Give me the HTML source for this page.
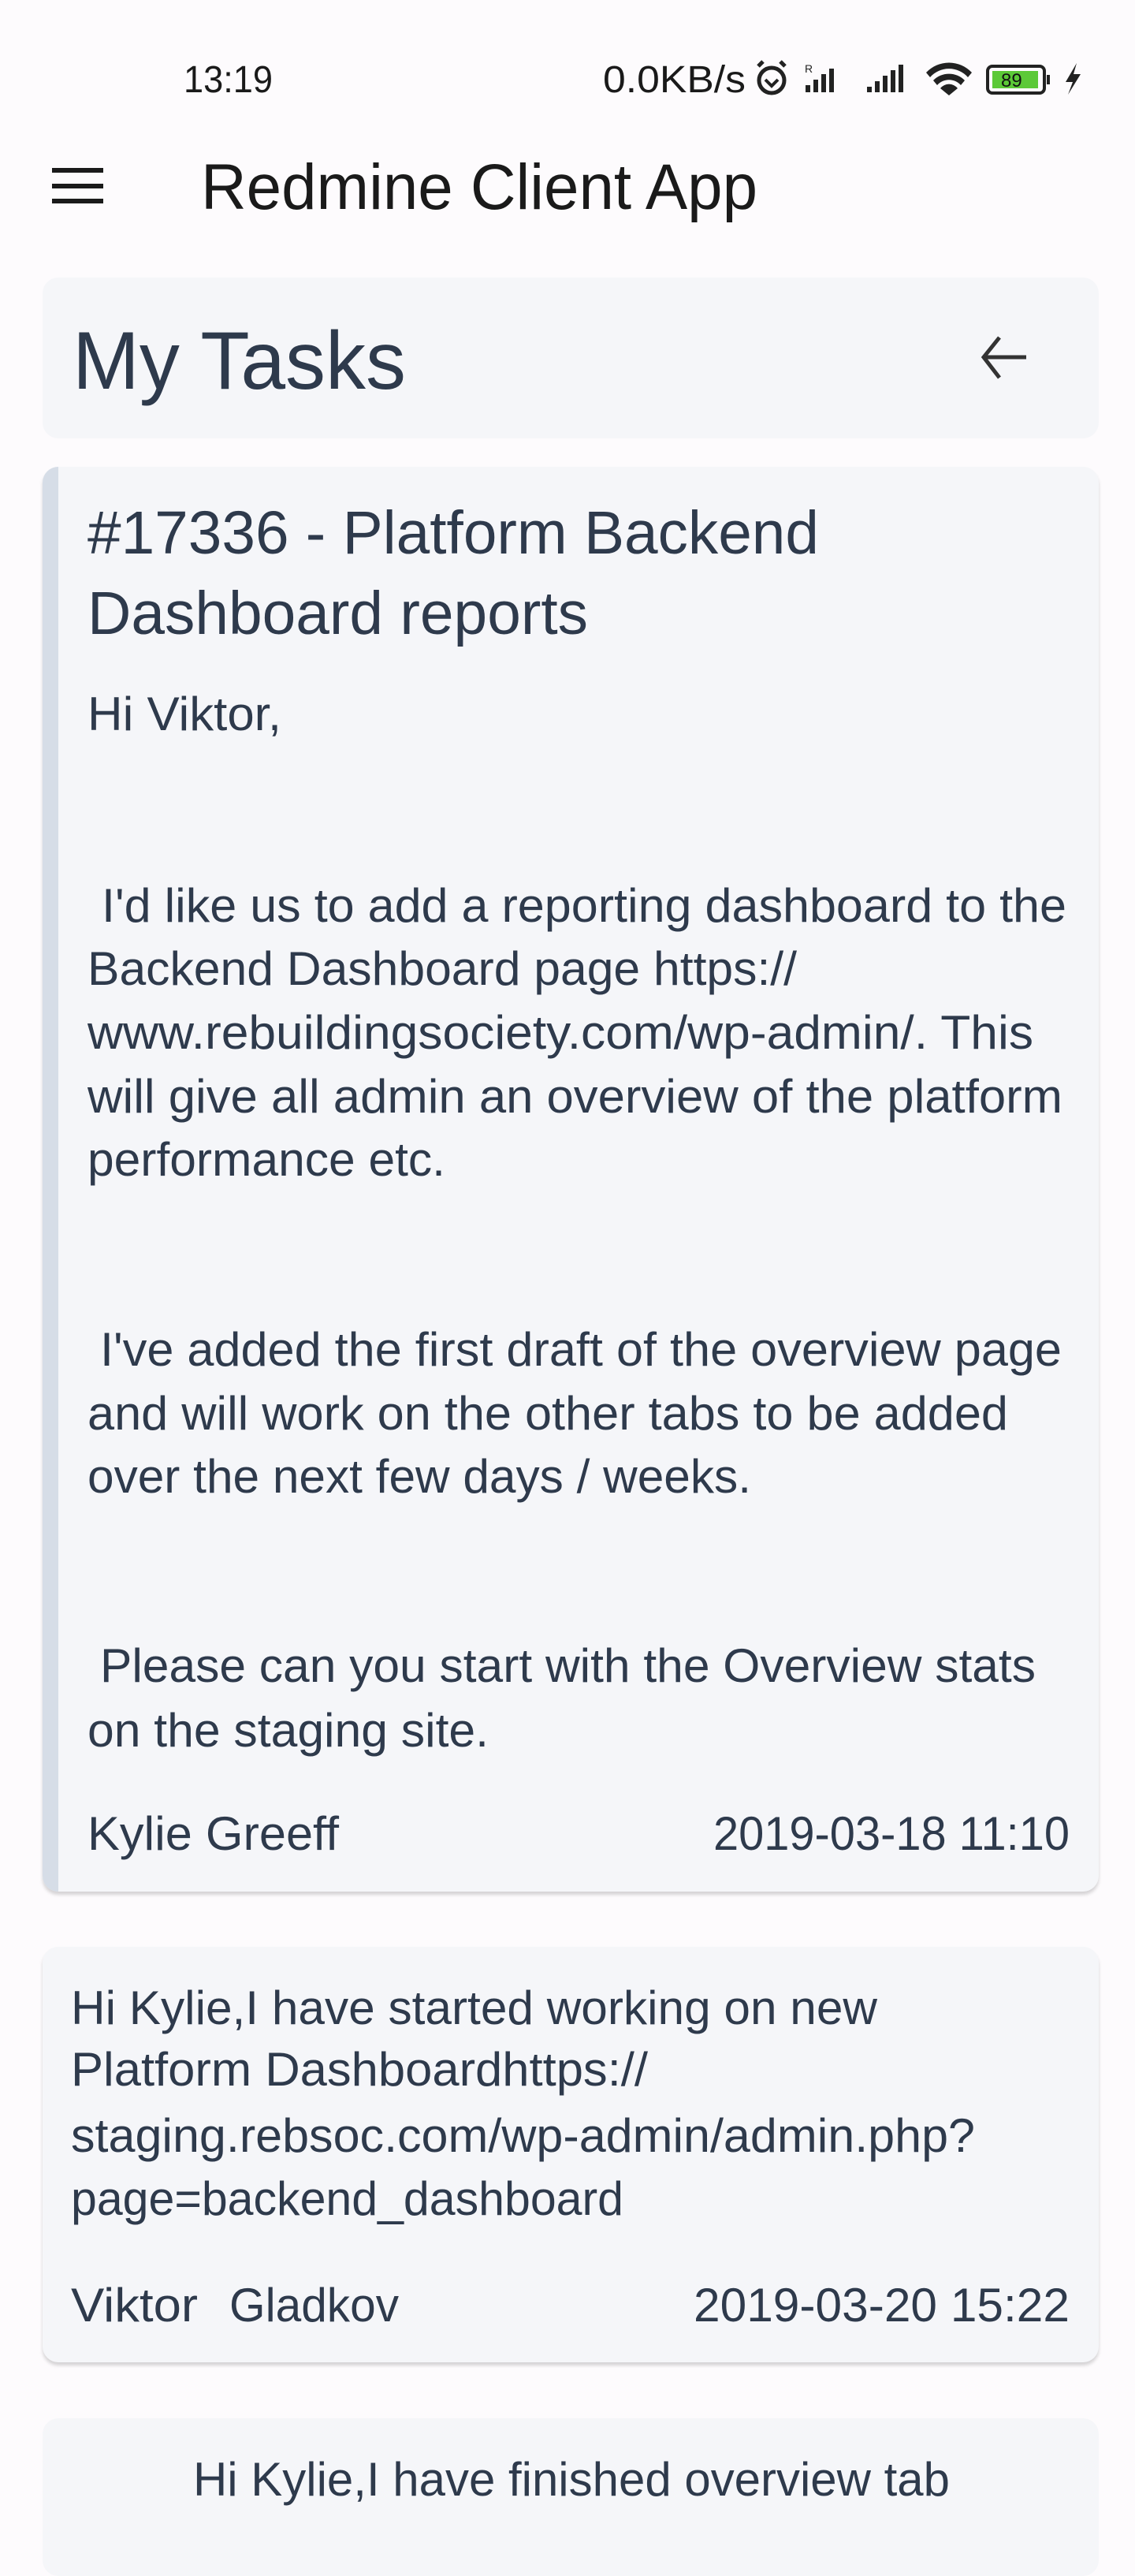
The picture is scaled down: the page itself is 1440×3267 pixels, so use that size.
<!DOCTYPE html>
<html><head><meta charset="utf-8"><style>
body{margin:0;width:1440px;height:3200px;background:#fdfbfd;overflow:hidden;position:relative;font-family:"Liberation Sans",sans-serif}
.card{position:absolute;left:54px;width:1340px;background:#f5f6f9;border-radius:20px}
svg{position:absolute;left:0;top:0}
</style></head><body>
<div class="card" style="top:352px;height:204px"></div>
<div class="card" style="top:592px;height:1807px;box-shadow:0 4px 4px rgba(0,0,0,.16);overflow:hidden"><div style="position:absolute;left:0;top:0;bottom:0;width:20px;background:#d6dde7"></div></div>
<div class="card" style="top:2469px;height:527px;box-shadow:0 4px 4px rgba(0,0,0,.16)"></div>
<div class="card" style="top:3067px;height:200px"></div>
<svg width="1440" height="3200" viewBox="0 0 1440 3200" font-family="Liberation Sans, sans-serif">
<g fill="#1a1a1a" font-size="48">
<text x="233" y="117" textLength="113" lengthAdjust="spacingAndGlyphs">13:19</text>
<text x="765" y="117" textLength="181" lengthAdjust="spacingAndGlyphs">0.0KB/s</text>
</g>
<g fill="none" stroke="#222" stroke-width="5">
<circle cx="979" cy="102" r="16"/><path d="M971 101l8 8 8-8" stroke-width="4"/><path d="M962 84l6-6M996 84l-6-6"/>
</g>
<g fill="#222">
<rect x="1022" y="108" width="6" height="9"/><rect x="1032" y="101" width="6" height="16"/><rect x="1042" y="94" width="6" height="23"/><rect x="1052" y="87" width="6" height="30"/>
<text x="1021" y="92" font-size="14">R</text>
<rect x="1100" y="110" width="6" height="7"/><rect x="1110" y="103" width="6" height="14"/><rect x="1120" y="96" width="6" height="21"/><rect x="1130" y="89" width="6" height="28"/><rect x="1140" y="82" width="6" height="35"/>
<path d="M1175 92a40 40 0 0 1 58 0l-5 6a32 32 0 0 0 -48 0z"/><path d="M1184 102a28 28 0 0 1 40 0l-5 6a20 20 0 0 0 -30 0z"/><path d="M1193 112a14 14 0 0 1 22 0l-11 9z"/>
<rect x="1253" y="84" width="72" height="34" rx="6" fill="none" stroke="#222" stroke-width="4"/>
<rect x="1259" y="90" width="58" height="22" fill="#5cc938"/>
<text x="1270" y="110" font-size="24" fill="#111">89</text>
<rect x="1328" y="95" width="4" height="12"/>
<path d="M1366 80l-14 24h9l-6 16 16-26h-9z"/>
</g>
<g fill="#1a1a1a"><rect x="66" y="213" width="65" height="6"/><rect x="66" y="233" width="65" height="6"/><rect x="66" y="252" width="65" height="6"/></g>
<text x="255" y="265" font-size="82" fill="#1a1a1a" textLength="706" lengthAdjust="spacingAndGlyphs">Redmine Client App</text>
<text x="92" y="493" font-size="104" fill="#2e3a4c" textLength="423" lengthAdjust="spacingAndGlyphs">My Tasks</text>
<path d="M1302 453H1250M1268 428L1248 453 1268 479" fill="none" stroke="#333" stroke-width="5"/>
<g fill="#2e3a4c" font-size="77">
<text x="111" y="702" textLength="928" lengthAdjust="spacingAndGlyphs">#17336 - Platform Backend</text>
<text x="111" y="804" textLength="635" lengthAdjust="spacingAndGlyphs">Dashboard reports</text>
</g>
<g fill="#2e3a4c" font-size="60">
<text x="111" y="926" textLength="246" lengthAdjust="spacingAndGlyphs">Hi Viktor,</text>
<text x="129" y="1169" textLength="1224" lengthAdjust="spacingAndGlyphs">I'd like us to add a reporting dashboard to the</text>
<text x="111" y="1249" textLength="900" lengthAdjust="spacingAndGlyphs">Backend Dashboard page https://</text>
<text x="111" y="1330" textLength="1200" lengthAdjust="spacingAndGlyphs">www.rebuildingsociety.com/wp-admin/. This</text>
<text x="111" y="1411" textLength="1237" lengthAdjust="spacingAndGlyphs">will give all admin an overview of the platform</text>
<text x="111" y="1491" textLength="454" lengthAdjust="spacingAndGlyphs">performance etc.</text>
<text x="127" y="1732" textLength="1220" lengthAdjust="spacingAndGlyphs">I've added the first draft of the overview page</text>
<text x="111" y="1813" textLength="1168" lengthAdjust="spacingAndGlyphs">and will work on the other tabs to be added</text>
<text x="111" y="1893" textLength="842" lengthAdjust="spacingAndGlyphs">over the next few days / weeks.</text>
<text x="127" y="2133" textLength="1187" lengthAdjust="spacingAndGlyphs">Please can you start with the Overview stats</text>
<text x="111" y="2215" textLength="509" lengthAdjust="spacingAndGlyphs">on the staging site.</text>
<text x="111" y="2346" textLength="319" lengthAdjust="spacingAndGlyphs">Kylie Greeff</text>
<text x="905" y="2346" textLength="452" lengthAdjust="spacingAndGlyphs">2019-03-18 11:10</text>
<text x="90" y="2567" textLength="1023" lengthAdjust="spacingAndGlyphs">Hi Kylie,I have started working on new</text>
<text x="90" y="2645" textLength="732" lengthAdjust="spacingAndGlyphs">Platform Dashboardhttps://</text>
<text x="90" y="2729" textLength="1147" lengthAdjust="spacingAndGlyphs">staging.rebsoc.com/wp-admin/admin.php?</text>
<text x="90" y="2809" textLength="701" lengthAdjust="spacingAndGlyphs">page=backend_dashboard</text>
<text x="90" y="2944" textLength="161" lengthAdjust="spacingAndGlyphs">Viktor</text>
<text x="291" y="2944" textLength="215" lengthAdjust="spacingAndGlyphs">Gladkov</text>
<text x="880" y="2944" textLength="477" lengthAdjust="spacingAndGlyphs">2019-03-20 15:22</text>
<text x="245" y="3165" textLength="960" lengthAdjust="spacingAndGlyphs">Hi Kylie,I have finished overview tab</text>
</g>
</svg>
</body></html>
